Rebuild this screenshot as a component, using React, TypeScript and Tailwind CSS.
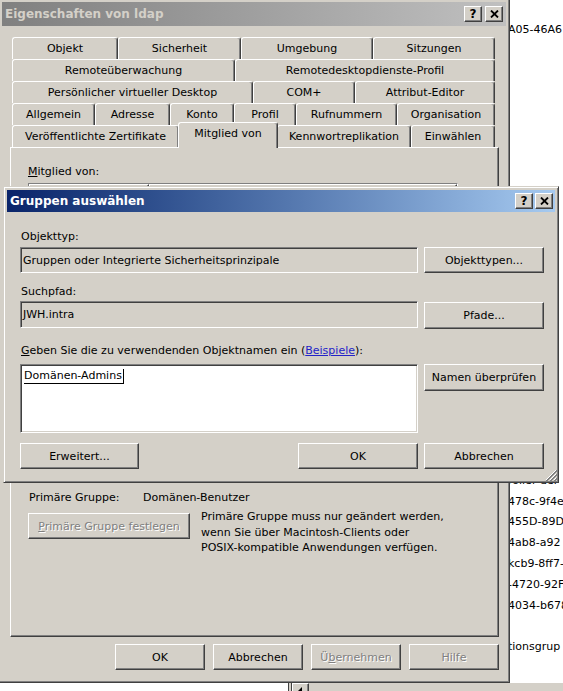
import React from "react";

// classic 3D edges
const FACE = "bg-[#d4d0c8]";
const RAISED =
  "border border-t-white border-l-white border-r-[#404040] border-b-[#404040] shadow-[inset_-1px_-1px_0_#808080]";
const SUNKEN =
  "border border-t-[#808080] border-l-[#808080] border-r-white border-b-white shadow-[inset_1px_1px_0_#404040,inset_-1px_-1px_0_#d4d0c8]";
const FRAME =
  "border border-t-[#d4d0c8] border-l-[#d4d0c8] border-r-[#404040] border-b-[#404040] shadow-[inset_1px_1px_0_#fff,inset_-1px_-1px_0_#808080] p-[3px]";

type BtnProps = { children: React.ReactNode; className?: string; disabled?: boolean };

function Button({ children, className = "", disabled = false }: BtnProps) {
  return (
    <div
      className={`${RAISED} ${FACE} h-[26px] flex items-center justify-center whitespace-nowrap ${
        disabled ? "text-[#808080] [text-shadow:1px_1px_0_#fff]" : "text-black"
      } ${className}`}
    >
      {children}
    </div>
  );
}

function CaptionButtons({ gap }: { gap: string }) {
  return (
    <div className={`flex ${gap}`}>
      <div className={`${RAISED} ${FACE} w-[18px] h-[16px] flex items-center justify-center text-[12px] font-bold leading-none`}>
        ?
      </div>
      <div className={`${RAISED} ${FACE} w-[18px] h-[16px] flex items-center justify-center`}>
        <svg width="9" height="8" viewBox="0 0 9 8">
          <path d="M1 0.5L8 7.5M8 0.5L1 7.5" stroke="#000" strokeWidth="1.8" />
        </svg>
      </div>
    </div>
  );
}

const TAB_ROWS: [string, string][][] = [
  [
    ["Objekt", "w-[106px]"],
    ["Sicherheit", "w-[123px]"],
    ["Umgebung", "w-[132px]"],
    ["Sitzungen", "w-[122px]"],
  ],
  [
    ["Remoteüberwachung", "w-[223px]"],
    ["Remotedesktopdienste-Profil", "w-[260px]"],
  ],
  [
    ["Persönlicher virtueller Desktop", "w-[241px]"],
    ["COM+", "w-[102px]"],
    ["Attribut-Editor", "w-[140px]"],
  ],
  [
    ["Allgemein", "w-[83px]"],
    ["Adresse", "w-[75px]"],
    ["Konto", "w-[64px]"],
    ["Profil", "w-[62px]"],
    ["Rufnummern", "w-[101px]"],
    ["Organisation", "w-[98px]"],
  ],
];

const TAB =
  "h-[22px] flex items-center justify-center whitespace-nowrap border-t border-l border-r border-t-white border-l-white border-r-[#404040] shadow-[inset_-1px_0_0_#808080] rounded-t-[3px] bg-[#d4d0c8]";

function Tabs() {
  return (
    <div className="ml-[2px] flex flex-col">
      {TAB_ROWS.map((row, i) => (
        <div key={i} className="flex">
          {row.map(([label, w]) => (
            <div key={label} className={`${TAB} ${w}`}>
              {label}
            </div>
          ))}
        </div>
      ))}
      <div className="flex h-[22px] items-end">
        <div className={`${TAB} w-[167px]`}>Veröffentlichte Zertifikate</div>
        <div className={`${TAB} relative z-10 top-[1px] -mx-[1px] h-[26px] w-[100px] pb-[4px]`}>Mitglied von</div>
        <div className={`${TAB} w-[134px]`}>Kennwortreplikation</div>
        <div className={`${TAB} w-[84px]`}>Einwählen</div>
      </div>
    </div>
  );
}

function PropertiesWindow() {
  return (
    <div className={`absolute left-[-2px] top-[-2px] w-[512px] h-[685px] ${FRAME} ${FACE} flex flex-col`}>
      <div className="h-[24px] flex items-center justify-between pl-[3px] pr-[3px] bg-linear-to-r from-[#808080] to-[#c0c0c0]">
        <span className="text-[#d4d0c8] font-bold text-[12px]">Eigenschaften von ldap</span>
        <CaptionButtons gap="gap-[3px]" />
      </div>

      <div className="pl-[8px] mt-[11px] flex flex-col">
        <Tabs />

        {/* Mitglied von page */}
        <div className={`${RAISED} ${FACE} w-[489px] h-[490px] pt-[17px] pl-[17px] flex flex-col`}>
          <div>
            <u>M</u>itglied von:
          </div>
          <div className={`${SUNKEN} bg-white mt-[5px] w-[430px] h-[255px]`}>
            <div className="flex h-[18px]">
              <div className={`${RAISED} ${FACE} w-[120px]`} />
              <div className={`${RAISED} ${FACE} flex-1`} />
            </div>
          </div>
          <div className="h-[34px]" />
          <div className="flex mt-[19px] ml-[1px]">
            <span className="w-[114px]">Primäre Gruppe:</span>
            <span>Domänen-Benutzer</span>
          </div>
          <div className="flex items-start mt-[9px]">
            <Button disabled className="w-[162px]">
              <span>
                <u>P</u>rimäre Gruppe festlegen
              </span>
            </Button>
            <p className="ml-[11px] -mt-[4px] leading-[15.5px]">
              Primäre Gruppe muss nur geändert werden,
              <br />
              wenn Sie über Macintosh-Clients oder
              <br />
              POSIX-kompatible Anwendungen verfügen.
            </p>
          </div>
        </div>

        <div className="mt-[7px] w-[489px] flex justify-end gap-[8px]">
          <Button className="w-[90px]">OK</Button>
          <Button className="w-[90px]">Abbrechen</Button>
          <Button disabled className="w-[90px]">
            <span>
              Ü<u>b</u>ernehmen
            </span>
          </Button>
          <Button disabled className="w-[90px]">Hilfe</Button>
        </div>
      </div>
    </div>
  );
}

function SizeGrip() {
  return (
    <svg className="absolute right-[1px] bottom-[1px]" width="12" height="12" viewBox="0 0 12 12">
      <path d="M11 1L1 11M11 5L5 11M11 9L9 11" stroke="#fff" strokeWidth="1" />
      <path d="M12 1L1 12M12 2L2 12M12 5L5 12M12 6L6 12M12 9L9 12M12 10L10 12" stroke="#808080" strokeWidth="1" />
    </svg>
  );
}

function GroupDialog() {
  return (
    <div className={`absolute left-[3px] top-[186px] w-[556px] h-[297px] ${FRAME} ${FACE} flex flex-col`}>
      <div className="h-[22px] flex items-center justify-between pl-[3px] pr-[2px] bg-linear-to-r from-[#0a246a] to-[#a6caf0]">
        <span className="text-white font-bold text-[12px]">Gruppen auswählen</span>
        <CaptionButtons gap="gap-[2px]" />
      </div>

      <div className="flex flex-col pl-[13px] pr-[11px]">
        <div className="mt-[18px] ml-[1px]">Objekttyp:</div>
        <div className="mt-[4px] flex gap-[6px]">
          <div className={`${SUNKEN} ${FACE} w-[398px] h-[26px] flex items-center pl-[2px]`}>
            Gruppen oder Integrierte Sicherheitsprinzipale
          </div>
          <Button className="w-[120px]">Objekttypen...</Button>
        </div>

        <div className="mt-[12px] ml-[1px]">Suchpfad:</div>
        <div className="mt-[3px] flex gap-[6px]">
          <div className={`${SUNKEN} ${FACE} w-[398px] h-[27px] flex items-center pl-[2px]`}>JWH.intra</div>
          <Button className="w-[120px] h-[27px] mt-[1px]">Pfade...</Button>
        </div>

        <div className="mt-[15px] ml-[1px]">
          <u>G</u>eben Sie die zu verwendenden Objektnamen ein (
          <span className="text-[#2323c8] underline">Beispiele</span>):
        </div>
        <div className="mt-[7px] flex items-start gap-[6px]">
          <div className={`${SUNKEN} bg-white w-[398px] h-[69px] pt-[4px] pl-[3px]`}>
            <span className="inline-block border-b border-r border-black pr-[1px] leading-[14px]">Domänen-Admins</span>
          </div>
          <Button className="w-[120px] h-[27px]">Namen überprüfen</Button>
        </div>

        <div className="mt-[10px] flex gap-[6px]">
          <Button className="w-[119px]">Erweitert...</Button>
          <div className="flex-1" />
          <Button className="w-[120px]">OK</Button>
          <Button className="w-[120px]">Abbrechen</Button>
        </div>
      </div>

      <SizeGrip />
    </div>
  );
}

// window behind, on the right
function BackgroundList() {
  const lines = ["roller der", "478c-9f4e", "455D-89D", "4ab8-a92", "kcb9-8ff7-", "-4720-92F", "4034-b678", "", "tionsgrup"];
  return (
    <div className="absolute left-[508px] top-0 w-[55px] h-[683px] bg-white overflow-hidden whitespace-nowrap leading-[20.8px]">
      <div className="pt-[20px]">A05-46A6</div>
      <div className="mt-[430px] flex flex-col">
        {lines.map((l, i) => (
          <div key={i} className="h-[20.8px]">
            {l}
          </div>
        ))}
      </div>
    </div>
  );
}

function BottomScroll() {
  return (
    <div className="absolute left-0 top-[683px] w-[563px] h-[8px] flex bg-[#d4d0c8]">
      <div className="w-[288px] bg-white" />
      <div className="w-[4px] border-l border-r border-[#404040]" />
      <div className={`${RAISED} ${FACE} w-[17px] h-[16px] flex justify-center pt-[3px]`}>
        <svg width="5" height="8" viewBox="0 0 5 8">
          <path d="M4 0L0 4L4 8Z" fill="#000" />
        </svg>
      </div>
    </div>
  );
}

export default function App() {
  return (
    <div className="relative w-[563px] h-[691px] overflow-hidden bg-white font-['DejaVu_Sans',sans-serif] text-[11px] leading-[13px] text-black">
      <BackgroundList />
      <BottomScroll />
      <PropertiesWindow />
      <GroupDialog />
    </div>
  );
}
